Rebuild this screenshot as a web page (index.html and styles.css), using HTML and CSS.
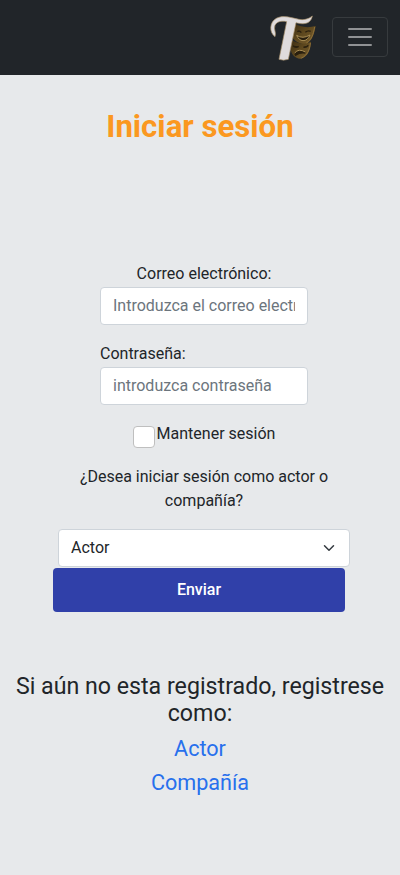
FILE: index.html
```html
<!DOCTYPE html>
<html lang="es">
<head>
<meta charset="utf-8">
<meta name="viewport" content="width=device-width, initial-scale=1">
<title>Iniciar sesión</title>
<link rel="stylesheet" href="styles.css">
</head>
<body>
<header class="navbar">
  <svg class="logo" viewBox="0 0 210 195" aria-hidden="true">
    <defs>
      <linearGradient id="gold" x1="0" y1="0" x2="1" y2="1">
        <stop offset="0" stop-color="#3b2c12"/>
        <stop offset=".5" stop-color="#5f491f"/>
        <stop offset="1" stop-color="#7b602f"/>
      </linearGradient>
    </defs>
    <path d="M102 54C117 66 144 70 167 63C162 87 158 106 140 116C124 121 106 110 96 96Z" fill="url(#gold)"/>
    <path d="M96 105C112 116 135 119 153 110C152 132 145 153 124 161C106 163 92 145 92 132Z" fill="url(#gold)"/>
    <path d="M164 66C160 88 154 105 139 114M151 114C149 134 142 152 124 159" fill="none" stroke="#8f7139" stroke-width="3"/>
    <path d="M112 80Q118 75 124 83M136 82Q144 75 152 79" fill="none" stroke="#2a200f" stroke-width="4"/>
    <path d="M110 91Q128 103 150 90Q143 107 129 107Q116 106 110 91Z" fill="#2a200f" stroke="#a98d54" stroke-width="3" stroke-linejoin="round"/>
    <path d="M99 122Q107 130 116 124M130 126Q138 129 145 121M105 147Q117 130 136 144Q120 141 107 151Z" fill="#2a200f" stroke="#2a200f" stroke-width="4"/>
    <path d="M104 144Q116 129 136 141" fill="none" stroke="#a98d54" stroke-width="3"/>
    <path d="M45 95C27 83 28 51 49 40C70 29 92 38 117 43C134 46 147 41 157 33C153 53 138 59 116 55L108 53L85 163Q70 168 57 163L80 50C65 47 50 49 45 61C40 74 50 82 45 95Z" fill="#dfdbdc" stroke="#a79069" stroke-width="2"/>
  </svg>
  <button class="toggler" type="button" aria-label="Menú">
    <svg viewBox="0 0 30 30" width="30" height="30"><path d="M4 7h22M4 15h22M4 23h22" fill="none" stroke="#909294" stroke-width="2" stroke-linecap="round"/></svg>
  </button>
</header>
<main>
  <h1 class="title">Iniciar sesión</h1>
  <form class="login">
    <div class="field">
      <label class="centered" for="email">Correo electrónico:</label>
      <input class="control" id="email" type="email" placeholder="Introduzca el correo electrónico">
    </div>
    <div class="field">
      <label for="password">Contraseña:</label>
      <input class="control" id="password" type="password" placeholder="introduzca contraseña">
    </div>
    <div class="remember">
      <input class="check" id="remember" type="checkbox"><label for="remember">Mantener sesión</label>
    </div>
    <p class="question">¿Desea iniciar sesión como actor o compañía?</p>
    <div class="select-wrap">
      <select class="select" aria-label="Tipo de usuario"><option>Actor</option><option>Compañía</option></select>
      <svg class="chevron" viewBox="0 0 16 16"><path d="M2 5l6 6 6-6" fill="none" stroke="#343a40" stroke-width="2" stroke-linecap="round" stroke-linejoin="round"/></svg>
    </div>
    <button class="submit" type="button">Enviar</button>
  </form>
  <section class="register">
    <h2 class="prompt">Si aún no esta registrado, registrese como:</h2>
    <a class="link" href="#">Actor</a>
    <a class="link" href="#">Compañía</a>
  </section>
</main>
</body>
</html>
```
FILE: styles.css
```css
* { box-sizing: border-box; }
body {
  margin: 0;
  min-height: 875px;
  background: #e7e9eb;
  color: #212529;
  font: 16px/24px Roboto, sans-serif;
}
input, select, button { font: inherit; margin: 0; }
.navbar {
  height: 75px;
  padding: 0 12px 1px 0;
  display: flex;
  align-items: center;
  justify-content: flex-end;
  background: #212529;
}
.logo { width: 70px; height: 65px; margin-right: 2px; }
.toggler {
  width: 56px;
  height: 40px;
  padding: 0;
  display: flex;
  align-items: center;
  justify-content: center;
  background: none;
  border: 1px solid #373b3e;
  border-radius: 4px;
}
.title {
  margin: 33px 0 0;
  text-align: center;
  font-size: 31.2px;
  line-height: 38px;
  font-weight: 700;
  color: #fb9820;
}
.login {
  margin-top: 116px;
  display: flex;
  flex-direction: column;
  align-items: center;
}
.field {
  width: 208px;
  margin: 0 0 17px 8px;
  display: flex;
  flex-direction: column;
  gap: 1px;
}
.centered { text-align: center; }
.control {
  width: 100%;
  height: 38px;
  padding: 5px 12px 7px;
  background: #fff;
  border: 1px solid #ced4da;
  border-radius: 4px;
}
.control::placeholder { color: #6c757d; opacity: 1; }
.remember {
  height: 24px;
  margin: 0 0 19px 8px;
  display: flex;
  gap: 2px;
}
.check {
  appearance: none;
  width: 22px;
  height: 22px;
  margin-top: 4px;
  background: #fff;
  border: 1px solid #bfbfbf;
  border-radius: 4px;
}
.question {
  width: 292px;
  margin: 0 0 16px 8px;
  text-align: center;
}
.select-wrap {
  position: relative;
  width: 292px;
  margin: 0 0 1px 8px;
}
.select {
  display: block;
  appearance: none;
  width: 292px;
  height: 38px;
  padding: 6px 36px 6px 12px;
  color: #212529;
  background: #fff;
  border: 1px solid #ced4da;
  border-radius: 4px;
}
.chevron {
  position: absolute;
  right: 15px;
  top: 12px;
  width: 12px;
  height: 14px;
}
.submit {
  width: 292px;
  height: 44px;
  margin-right: 2px;
  padding: 0;
  color: #fff;
  font-weight: 500;
  background: #3040a9;
  border: 0;
  border-radius: 4px;
}
.register {
  margin-top: 61px;
  display: flex;
  flex-direction: column;
  align-items: center;
  gap: 8px;
}
.prompt {
  margin: 0 0 1px;
  text-align: center;
  font-size: 23.2px;
  line-height: 27px;
  font-weight: 400;
}
.link {
  font-size: 21.6px;
  line-height: 26px;
  color: #2870ed;
  text-decoration: none;
}
```
